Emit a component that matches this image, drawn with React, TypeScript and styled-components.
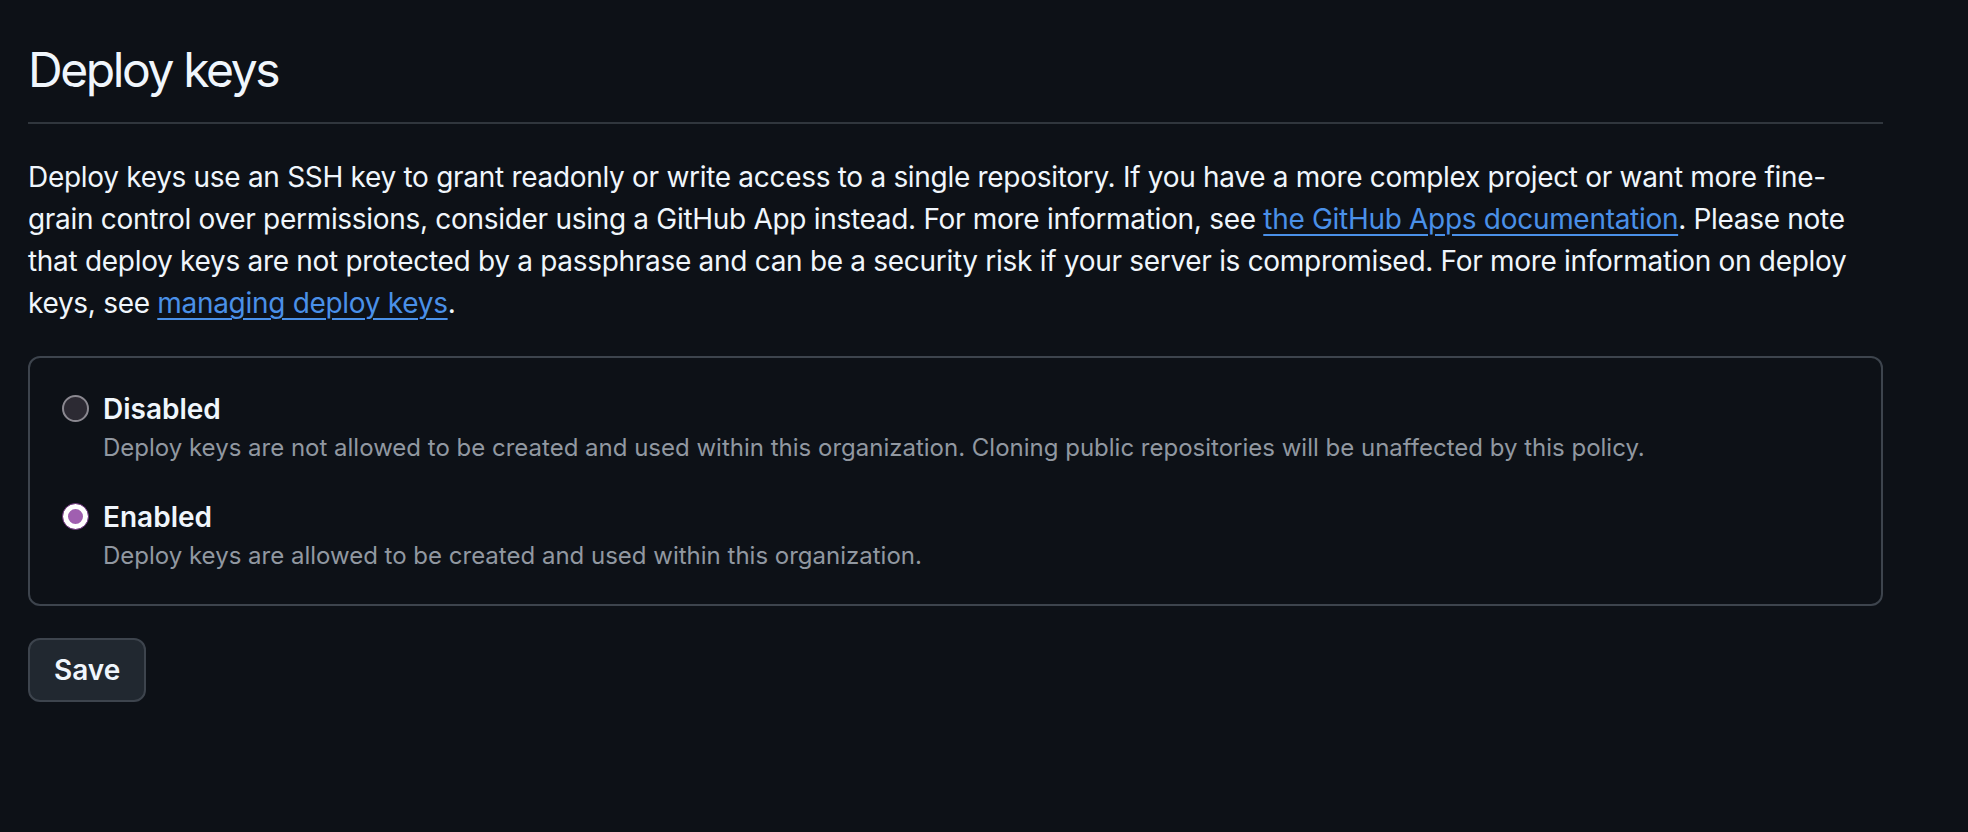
import { useState } from 'react';
import styled, { createGlobalStyle } from 'styled-components';

const GlobalStyle = createGlobalStyle`
  html, body {
    margin: 0;
    padding: 0;
    background: #0d1117;
  }
  body {
    font-family: Inter, "Liberation Sans", Arial, sans-serif;
    color: #f0f6fc;
  }
`;

// --- Styled Components ---
const Page = styled.main`
  min-height: 832px;
  box-sizing: border-box;
  padding: 34px 85px 0 28px;
  background: #0d1117;
`;

const Subhead = styled.div`
  padding-bottom: 16px;
  border-bottom: 2px solid #30363d;
  margin-bottom: 32px;
`;

const Heading = styled.h2`
  margin: 0;
  font-size: 48px;
  font-weight: 400;
  line-height: 72px;
  letter-spacing: -2.4px;
  color: #f0f6fc;
`;

const Intro = styled.p`
  margin: 0 0 32px;
  font-size: 28px;
  line-height: 42px;
  letter-spacing: -0.3px;
  color: #f0f6fc;
`;

const Link = styled.a`
  color: #4a90e8;
  text-decoration: underline;
  text-decoration-thickness: 2px;
  text-underline-offset: 5px;
`;

const OptionsBox = styled.fieldset`
  margin: 0 0 32px;
  padding: 30px 32px 30px;
  border: 2px solid #3d444d;
  border-radius: 12px;
  display: flex;
  flex-direction: column;
  gap: 30px;
`;

const Option = styled.label`
  display: grid;
  grid-template-columns: 27px 1fr;
  column-gap: 14px;
  cursor: pointer;
`;

const Radio = styled.input`
  appearance: none;
  margin: 7px 0 0;
  width: 27px;
  height: 27px;
  border-radius: 50%;
  box-sizing: border-box;
  border: 2px solid #8a8890;
  background: #2c2a33;
  cursor: pointer;

  &:checked {
    border: 1px solid #6e3d7c;
    background: #a05fb0;
    box-shadow: inset 0 0 0 5px #ffffff;
  }
`;

const OptionTitle = styled.span`
  font-size: 28px;
  font-weight: 600;
  line-height: 42px;
  color: #f0f6fc;
`;

const OptionNote = styled.span`
  grid-column: 2;
  font-size: 24px;
  line-height: 36px;
  color: #9198a1;
`;

const SaveButton = styled.button`
  height: 64px;
  padding: 0 24px;
  border: 2px solid #3d444d;
  border-radius: 12px;
  background: #212830;
  color: #f0f6fc;
  font-family: Inter, "Liberation Sans", Arial, sans-serif;
  font-size: 28px;
  font-weight: 600;
  cursor: pointer;
`;

type Policy = 'disabled' | 'enabled';

const options: { value: Policy; title: string; note: string }[] = [
  {
    value: 'disabled',
    title: 'Disabled',
    note: 'Deploy keys are not allowed to be created and used within this organization. Cloning public repositories will be unaffected by this policy.',
  },
  {
    value: 'enabled',
    title: 'Enabled',
    note: 'Deploy keys are allowed to be created and used within this organization.',
  },
];

// --- Component ---
export default function App() {
  const [policy, setPolicy] = useState<Policy>('enabled');

  return (
    <>
      <GlobalStyle />
      <Page>
        <Subhead>
          <Heading>Deploy keys</Heading>
        </Subhead>
        <Intro>
          Deploy keys use an SSH key to grant readonly or write access to a single repository. If you have a more
          complex project or want more fine-grain control over permissions, consider using a GitHub App instead. For
          more information, see <Link href="#">the GitHub Apps documentation</Link>. Please note that deploy keys are
          not protected by a passphrase and can be a security risk if your server is compromised. For more information
          on deploy keys, see <Link href="#">managing deploy keys</Link>.
        </Intro>
        <OptionsBox>
          {options.map(opt => (
            <Option key={opt.value}>
              <Radio
                type="radio"
                name="deploy-keys"
                checked={policy === opt.value}
                onChange={() => setPolicy(opt.value)}
              />
              <OptionTitle>{opt.title}</OptionTitle>
              <OptionNote>{opt.note}</OptionNote>
            </Option>
          ))}
        </OptionsBox>
        <SaveButton type="button">Save</SaveButton>
      </Page>
    </>
  );
}
